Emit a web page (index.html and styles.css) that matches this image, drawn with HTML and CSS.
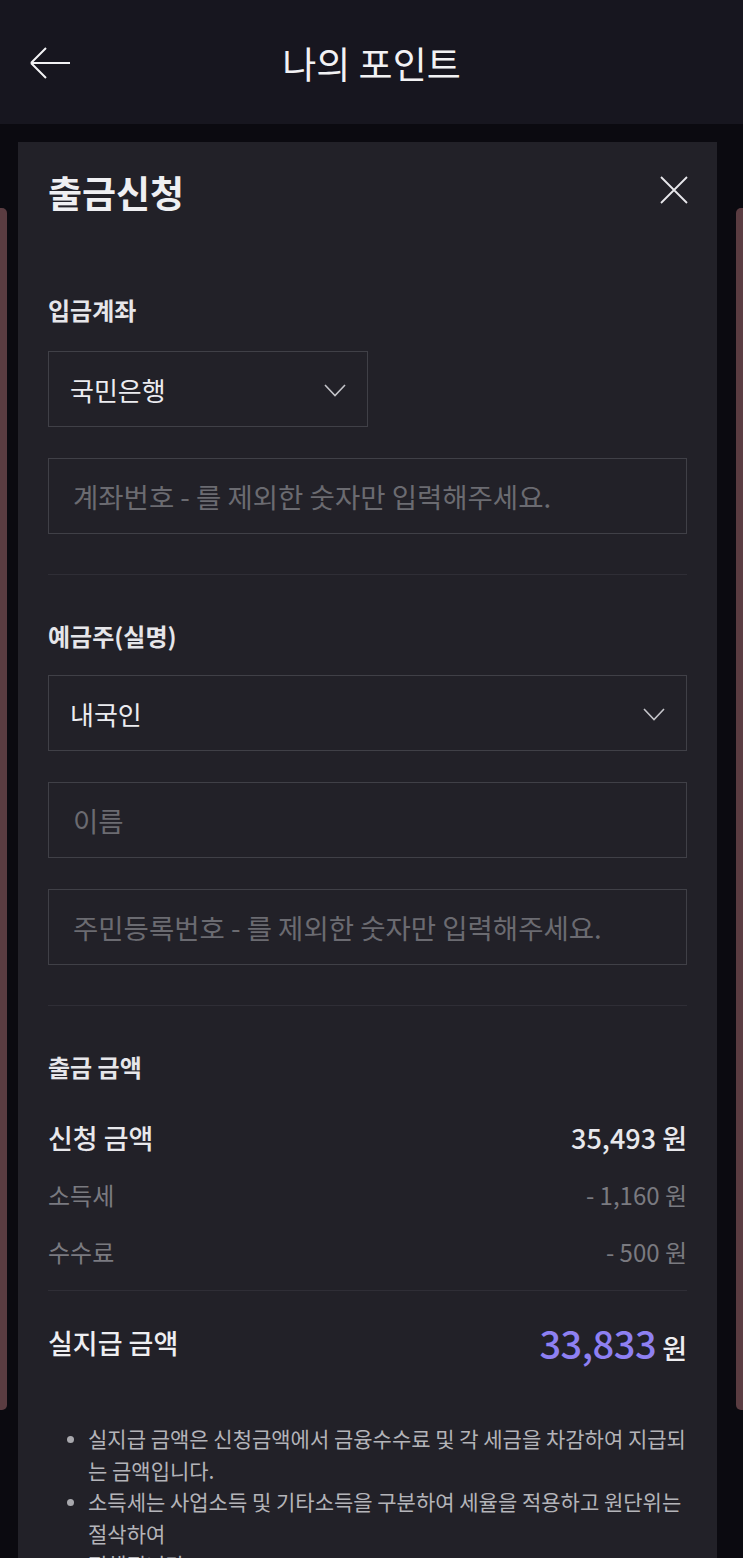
FILE: index.html
```html
<html>
	<head>
		<meta charset="utf-8">
		<link rel="stylesheet" href="styles.css">
	</head>
	<body>
		<div class="topBar">
			<svg class="backIcon" width="42" height="34" viewBox="0 0 42 34">
				<path d="M2 17 H41 M2 17 L17 2 M2 17 L17 32" fill="none" stroke="#f2f2f4" stroke-width="2"/>
			</svg>
			<div class="topTitle">나의 포인트</div>
		</div>
		<div class="dimArea">
			<div class="sideCard leftCard"></div>
			<div class="sideCard rightCard"></div>
			<div class="popup">
				<div class="popHead">
					<div class="popTitle">출금신청</div>
					<svg class="closeIcon" width="28" height="28" viewBox="0 0 28 28">
						<path d="M1 1 L27 27 M27 1 L1 27" fill="none" stroke="#e8e8ec" stroke-width="1.8"/>
					</svg>
				</div>

				<!-- 입금계좌 -->
				<div class="secLabel firstLabel">입금계좌</div>
				<div class="selBox bankSel">
					<span>국민은행</span>
					<svg class="chevron" width="22" height="13" viewBox="0 0 22 13">
						<path d="M1 1 L11 11.5 L21 1" fill="none" stroke="#c4c4c9" stroke-width="1.6"/>
					</svg>
				</div>
				<input class="txtInput" type="text" placeholder="계좌번호 - 를 제외한 숫자만 입력해주세요.">
				<div class="lineSep"></div>

				<!-- 예금주 -->
				<div class="secLabel">예금주(실명)</div>
				<div class="selBox">
					<span>내국인</span>
					<svg class="chevron" width="22" height="13" viewBox="0 0 22 13">
						<path d="M1 1 L11 11.5 L21 1" fill="none" stroke="#c4c4c9" stroke-width="1.6"/>
					</svg>
				</div>
				<input class="txtInput" type="text" placeholder="이름">
				<input class="txtInput" type="text" placeholder="주민등록번호 - 를 제외한 숫자만 입력해주세요.">
				<div class="lineSep"></div>

				<!-- 출금 금액 -->
				<div class="secLabel">출금 금액</div>
				<div class="amtRow mainRow">
					<span>신청 금액</span>
					<span>35,493 원</span>
				</div>
				<div class="amtRow subRow">
					<span>소득세</span>
					<span>- 1,160 원</span>
				</div>
				<div class="amtRow subRow">
					<span>수수료</span>
					<span>- 500 원</span>
				</div>
				<div class="lineSep sumSep"></div>
				<div class="amtRow totalRow">
					<span>실지급 금액</span>
					<span><span class="totalNum">33,833</span> 원</span>
				</div>

				<ul class="noteList">
					<li>실지급 금액은 신청금액에서 금융수수료 및 각 세금을 차감하여 지급되<br>는 금액입니다.</li>
					<li>소득세는 사업소득 및 기타소득을 구분하여 세율을 적용하고 원단위는<br>절삭하여<br>정해집니다.</li>
				</ul>
			</div>
		</div>
	</body>
</html>
```

FILE: styles.css
```css
html, body {
	margin: 0;
	height: 1558px;
	overflow: hidden;
}

body {
	background-color: #0b0a10;
	font-family: "Noto Sans CJK KR", "Noto Sans", sans-serif;
	color: #e8e8ec;
}

.topBar {
	position: relative;
	height: 124px;
	background-color: #17161f;
	display: flex;
	align-items: center;
	justify-content: center;
}

.backIcon {
	position: absolute;
	left: 29px;
	top: 46px;
}

.topTitle {
	font-size: 37px;
	line-height: 42px;
	color: #f2f2f4;
	margin-top: 2px;
}

.dimArea {
	position: relative;
	padding: 18px 26px 0 18px;
}

.sideCard {
	position: absolute;
	top: 84px;
	width: 7px;
	height: 1202px;
	background-color: #5a3c41;
}

.leftCard {
	left: 0;
	border-radius: 0 5px 5px 0;
}

.rightCard {
	right: 0;
	border-radius: 5px 0 0 5px;
}

.popup {
	position: relative;
	background-color: #222128;
	padding: 30px 30px 0 30px;
	height: 1416px;
	box-sizing: border-box;
	overflow: hidden;
}

.popHead {
	display: flex;
	align-items: center;
	justify-content: space-between;
	height: 40px;
}

.popTitle {
	font-size: 37px;
	font-weight: bold;
	line-height: 40px;
	color: #efeff2;
}

.closeIcon {
	margin-right: -1px;
	margin-top: -4px;
}

.secLabel {
	font-size: 24px;
	font-weight: bold;
	line-height: 30px;
	margin-top: 46px;
	color: #e6e6ea;
}

.firstLabel {
	margin-top: 83px;
}

.selBox {
	margin-top: 24px;
	height: 76px;
	box-sizing: border-box;
	border: 1px solid #404047;
	display: flex;
	align-items: center;
	justify-content: space-between;
	padding: 0 21px 0 21px;
	font-size: 26px;
	color: #ececf0;
}

.bankSel {
	width: 320px;
	margin-top: 26px;
}

.chevron {
	margin-top: 2px;
}

.txtInput {
	display: block;
	width: 100%;
	height: 76px;
	box-sizing: border-box;
	margin: 31px 0 0 0;
	border: 1px solid #404047;
	background-color: transparent;
	padding: 0 24px;
	font-family: "Noto Sans CJK KR", "Noto Sans", sans-serif;
	font-size: 27.5px;
	color: #ececf0;
	outline: none;
}

.txtInput::placeholder {
	color: #6b6b71;
}

.lineSep {
	height: 1px;
	background-color: #2f2e36;
	margin-top: 40px;
}

.amtRow {
	display: flex;
	justify-content: space-between;
	align-items: center;
}

.mainRow {
	margin-top: 37px;
	height: 36px;
	font-size: 27px;
	font-weight: 500;
	color: #e8e8ec;
}

.subRow {
	margin-top: 21px;
	height: 36px;
	font-size: 24px;
	color: #7a7a80;
}

.sumSep {
	margin-top: 21px;
}

.totalRow {
	margin-top: 29px;
	height: 44px;
	font-size: 27px;
	font-weight: 500;
	color: #eeeef1;
}

.totalNum {
	font-size: 38px;
	font-weight: 500;
	color: #8e80f2;
	letter-spacing: -0.5px;
}

.noteList {
	margin: 59px 0 0 0;
	padding: 0 0 0 40px;
	list-style: none;
}

.noteList li {
	position: relative;
	font-size: 21px;
	line-height: 31.5px;
	color: #b4b4b9;
	white-space: nowrap;
}

.noteList li::before {
	content: "";
	position: absolute;
	left: -21px;
	top: 13px;
	width: 7px;
	height: 7px;
	border-radius: 50%;
	background-color: #a8a8ad;
}
```
